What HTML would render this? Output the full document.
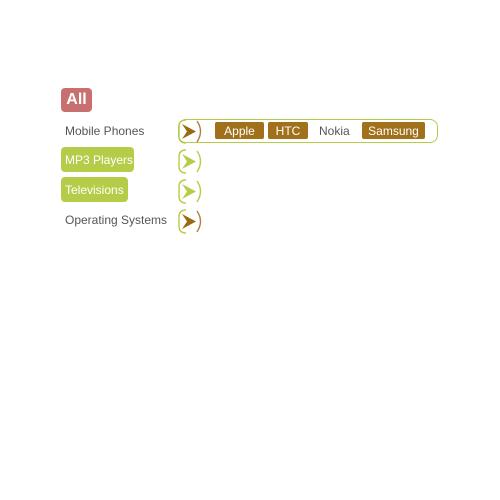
<!DOCTYPE html>
<html><head><style>
body{margin:0;width:500px;height:500px;background:#fff;font-family:"Liberation Sans","DejaVu Sans",sans-serif;position:relative;overflow:hidden}
.a{position:absolute;white-space:nowrap}
.all{left:61px;top:88px;width:31px;height:24px;background:#c86f6f;border-radius:4px;color:#fff;font-weight:bold;font-size:16px;line-height:24px;text-align:center}
.lbl{font-size:12px;line-height:16px;color:#555;left:65px}
.pill{background:#b5cc48;color:#fff;border-radius:4px;font-size:12px;padding-left:4px;height:25px;line-height:26px;left:61px;box-sizing:border-box}
.tag{background:#a0701a;color:#fff;font-size:12px;height:17px;line-height:18px;text-align:center;border-radius:2px;top:122px}
</style></head><body>
<div class="a all">All</div>
<div class="a lbl" style="top:123px">Mobile Phones</div>
<div class="a pill" style="top:147px;width:73px">MP3 Players</div>
<div class="a pill" style="top:177px;width:67px">Televisions</div>
<div class="a lbl" style="top:212px">Operating Systems</div>
<div class="a" style="left:178px;top:119px;width:258px;height:22px;border:1.5px solid #b5cc48;border-radius:8px"></div>
<svg class="a" style="left:176px;top:117px" width="30" height="120" viewBox="0 0 30 120">
<g fill="none" stroke-width="1.4">
<path d="M10 3 Q3 3 3 10 V19 Q3 26 10 26" stroke="#b5cc48"/>
<path d="M21 4 Q28 14 21 25" stroke="#b08040"/>
<path d="M10 33 Q3 33 3 40 V49 Q3 56 10 56" stroke="#b5cc48"/>
<path d="M21 34 Q28 44 21 55" stroke="#b5cc48"/>
<path d="M10 63 Q3 63 3 70 V79 Q3 86 10 86" stroke="#b5cc48"/>
<path d="M21 64 Q28 74 21 85" stroke="#b5cc48"/>
<path d="M10 93 Q3 93 3 100 V109 Q3 116 10 116" stroke="#b5cc48"/>
<path d="M21 94 Q28 104 21 115" stroke="#b08040"/>
</g>
<path d="M6 7 L20 14.5 L6 22 L11 14.5Z" fill="#9a6a10"/>
<path d="M6 37 L20 44.5 L6 52 L11 44.5Z" fill="#b5cc48"/>
<path d="M6 67 L20 74.5 L6 82 L11 74.5Z" fill="#b5cc48"/>
<path d="M6 97 L20 104.5 L6 112 L11 104.5Z" fill="#9a6a10"/>
</svg>
<div class="a tag" style="left:215px;width:49px">Apple</div>
<div class="a tag" style="left:268px;width:40px">HTC</div>
<div class="a" style="left:319px;top:122px;font-size:12px;line-height:18px;color:#555">Nokia</div>
<div class="a tag" style="left:362px;width:63px">Samsung</div>
</body></html>
